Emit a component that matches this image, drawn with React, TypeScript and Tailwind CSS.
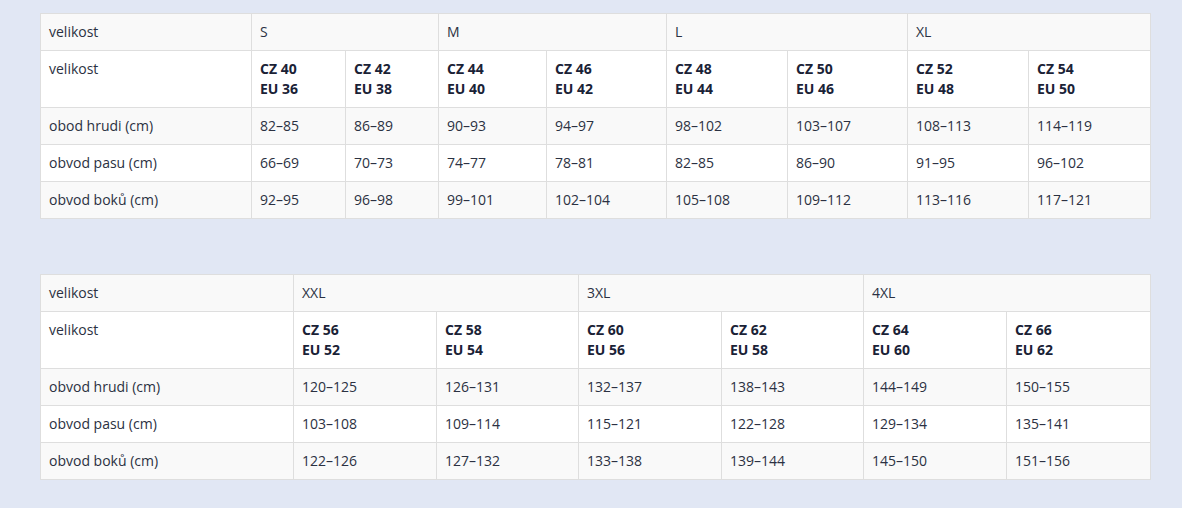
const font = { fontFamily: '"Open Sans", "Noto Sans", sans-serif' };

type Table = {
  widths: number[];
  groups: { label: string; span: number }[];
  sizes: [string, string][];
  rows: { label: string; values: string[] }[];
};

const tables: Table[] = [
  {
    widths: [211, 94, 93, 108, 120, 121, 120, 121, 122],
    groups: [
      { label: "S", span: 2 },
      { label: "M", span: 2 },
      { label: "L", span: 2 },
      { label: "XL", span: 2 },
    ],
    sizes: [
      ["CZ 40", "EU 36"],
      ["CZ 42", "EU 38"],
      ["CZ 44", "EU 40"],
      ["CZ 46", "EU 42"],
      ["CZ 48", "EU 44"],
      ["CZ 50", "EU 46"],
      ["CZ 52", "EU 48"],
      ["CZ 54", "EU 50"],
    ],
    rows: [
      { label: "obod hrudi (cm)", values: ["82–85", "86–89", "90–93", "94–97", "98–102", "103–107", "108–113", "114–119"] },
      { label: "obvod pasu (cm)", values: ["66–69", "70–73", "74–77", "78–81", "82–85", "86–90", "91–95", "96–102"] },
      { label: "obvod boků (cm)", values: ["92–95", "96–98", "99–101", "102–104", "105–108", "109–112", "113–116", "117–121"] },
    ],
  },
  {
    widths: [253, 143, 142, 143, 142, 143, 144],
    groups: [
      { label: "XXL", span: 2 },
      { label: "3XL", span: 2 },
      { label: "4XL", span: 2 },
    ],
    sizes: [
      ["CZ 56", "EU 52"],
      ["CZ 58", "EU 54"],
      ["CZ 60", "EU 56"],
      ["CZ 62", "EU 58"],
      ["CZ 64", "EU 60"],
      ["CZ 66", "EU 62"],
    ],
    rows: [
      { label: "obvod hrudi (cm)", values: ["120–125", "126–131", "132–137", "138–143", "144–149", "150–155"] },
      { label: "obvod pasu (cm)", values: ["103–108", "109–114", "115–121", "122–128", "129–134", "135–141"] },
      { label: "obvod boků (cm)", values: ["122–126", "127–132", "133–138", "139–144", "145–150", "151–156"] },
    ],
  },
];

const cell = "border border-[#dedede] px-2 py-2 text-left align-top font-normal";

function SizeTable({ t }: { t: Table }) {
  return (
    <table className="w-[1110px] table-fixed border-collapse text-sm leading-5 text-[#2b3142]">
      <colgroup>
        {t.widths.map((w, i) => (
          <col key={i} style={{ width: w }} />
        ))}
      </colgroup>
      <tbody>
        <tr className="bg-[#f9f9f9]">
          <td className={cell}>velikost</td>
          {t.groups.map((g) => (
            <td key={g.label} colSpan={g.span} className={cell}>
              {g.label}
            </td>
          ))}
        </tr>
        <tr className="bg-white">
          <td className={cell}>velikost</td>
          {t.sizes.map(([cz, eu]) => (
            <td key={cz} className={`${cell} !font-bold text-[#1a2236]`}>
              {cz}
              <br />
              {eu}
            </td>
          ))}
        </tr>
        {t.rows.map((r, i) => (
          <tr key={r.label} className={i % 2 === 0 ? "bg-[#f9f9f9]" : "bg-white"}>
            <td className={cell}>{r.label}</td>
            {r.values.map((v, j) => (
              <td key={j} className={cell}>
                {v}
              </td>
            ))}
          </tr>
        ))}
      </tbody>
    </table>
  );
}

export default function App() {
  return (
    <div className="min-h-[508px] bg-[#e1e7f4] pl-10 pt-[13px]" style={font}>
      <div className="flex flex-col gap-[55px]">
        {tables.map((t, i) => (
          <SizeTable key={i} t={t} />
        ))}
      </div>
    </div>
  );
}
